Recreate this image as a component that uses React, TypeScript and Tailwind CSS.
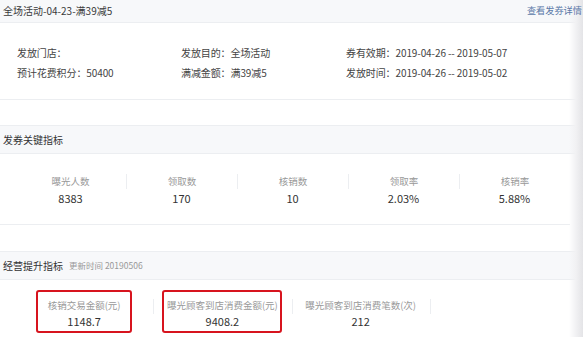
export default function App() {
  const infoRows = [
    ['发放门店：', '发放目的：全场活动', '券有效期：2019-04-26 -- 2019-05-07'],
    ['预计花费积分：50400', '满减金额：满39减5', '发放时间：2019-04-26 -- 2019-05-02'],
  ];

  const keyMetrics = [
    { label: '曝光人数', value: '8383' },
    { label: '领取数', value: '170' },
    { label: '核销数', value: '10' },
    { label: '领取率', value: '2.03%' },
    { label: '核销率', value: '5.88%' },
  ];

  const bizMetrics = [
    { label: '核销交易金额(元)', value: '1148.7', box: 'w-[96px] border-2 border-[#d7141e]' },
    { label: '曝光顾客到店消费金额(元)', value: '9408.2', box: 'w-[120px] border-2 border-[#d7141e]' },
    { label: '曝光顾客到店消费笔数(次)', value: '212', box: 'w-[120px] border-2 border-transparent' },
  ];

  return (
    <div className="relative w-[583px] h-[337px] overflow-hidden bg-white text-[#333] font-['Noto_Sans_CJK_SC',sans-serif]">
      {/* title bar */}
      <div className="h-[23px] flex items-center justify-between pl-[3px] pr-[1px] bg-[#f7f8fa] border-b border-[#eceef1] text-[10px] leading-none">
        <span className="text-[#3a3a3a]">全场活动-04-23-满39减5</span>
        <span className="relative z-10 text-[9.2px] text-[#5a78a8]">查看发券详情</span>
      </div>

      {/* coupon info */}
      <div className="pt-[20px] pb-[16px] pl-[17px] border-b border-[#eceef1] text-[10px] text-[#444]">
        {infoRows.map((row, i) => (
          <div key={i} className="grid grid-cols-[164px_165px_1fr] h-[20px] items-center leading-none tracking-[-0.1px]">
            {row.map(c => (
              <span key={c}>{c}</span>
            ))}
          </div>
        ))}
      </div>

      <div className="h-[25px]" />

      {/* key metrics */}
      <div className="h-[29px] flex items-center pl-[3px] bg-[#f7f8fa] border-y border-[#eceef1] text-[10px] leading-none">
        发券关键指标
      </div>
      <div className="grid grid-cols-5 w-[570px] pl-[15px] pt-[20px] pb-[16px] border-b border-[#eceef1]">
        {keyMetrics.map((m, i) => (
          <div key={m.label} className="flex flex-col items-center">
            <div className={`w-full h-[15px] flex items-center justify-center text-[9.5px] leading-none text-[#999] ${i > 0 ? 'border-l border-[#eceef1]' : ''}`}>
              {m.label}
            </div>
            <div className="h-[19px] flex items-center text-[11px] leading-none text-[#333]">{m.value}</div>
          </div>
        ))}
      </div>

      <div className="h-[26px]" />

      {/* business metrics */}
      <div className="h-[29px] flex items-center gap-[6px] pl-[3px] bg-[#f7f8fa] border-y border-[#eceef1] leading-none">
        <span className="text-[10px]">经营提升指标</span>
        <span className="text-[8.5px] text-[#999]">更新时间 20190506</span>
      </div>
      <div className="grid grid-cols-4 w-[568px] pl-[15px] pt-[10px]">
        {bizMetrics.map((m, i) => (
          <div key={m.label} className="relative flex justify-center">
            {i > 0 && <span className="absolute left-0 top-[9px] h-[15px] w-px bg-[#eceef1]" />}
            <div className={`h-[43px] rounded-[3px] flex flex-col items-center pt-[7px] ${m.box}`}>
              <div className="h-[14px] flex items-center text-[9.5px] leading-none text-[#999] whitespace-nowrap">{m.label}</div>
              <div className="h-[16px] flex items-center text-[11px] leading-none text-[#333]">{m.value}</div>
            </div>
          </div>
        ))}
        <div className="relative">
          <span className="absolute left-0 top-[9px] h-[15px] w-px bg-[#eceef1]" />
        </div>
      </div>

      {/* right edge shade */}
      <div className="pointer-events-none absolute top-0 right-0 h-full w-[14px] bg-gradient-to-r from-white/0 via-[#f1f1f3] to-[#e4e4e7]" />
    </div>
  );
}
